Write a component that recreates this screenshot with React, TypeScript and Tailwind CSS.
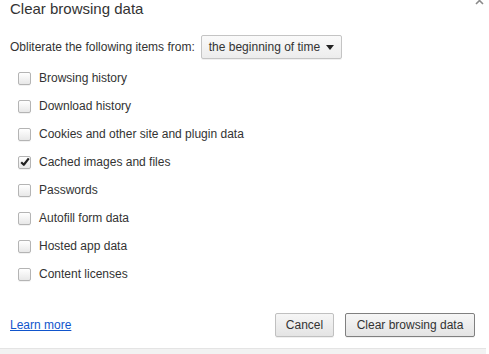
import React from 'react'

const items = [
  { label: 'Browsing history', checked: false },
  { label: 'Download history', checked: false },
  { label: 'Cookies and other site and plugin data', checked: false },
  { label: 'Cached images and files', checked: true },
  { label: 'Passwords', checked: false },
  { label: 'Autofill form data', checked: false },
  { label: 'Hosted app data', checked: false },
  { label: 'Content licenses', checked: false },
]

const Checkbox = ({ checked }: { checked: boolean }) => (
  <span className="flex h-[13px] w-[13px] shrink-0 items-center justify-center rounded-[2px] border border-[#b4b4b4] bg-gradient-to-b from-[#ffffff] to-[#e8e8e8] shadow-[0_1px_0_rgba(0,0,0,0.05)]">
    {checked && (
      <svg width="10" height="10" viewBox="0 0 10 10">
        <path d="M1.2 5.2 L3.8 7.8 L8.8 1.4" fill="none" stroke="#222" strokeWidth="2.2" strokeLinejoin="round" />
      </svg>
    )}
  </span>
)

const App = () => {
  return (
    <div className="relative h-[354px] w-[489px] overflow-hidden bg-white font-['Liberation_Sans',Arial,sans-serif] text-[#333]">
      <button className="absolute left-[475px] top-[-4px] text-[#888]">
        <svg width="9" height="9" viewBox="0 0 9 9">
          <path d="M1 1 L8 8 M8 1 L1 8" stroke="#8a8a8a" strokeWidth="1.6" />
        </svg>
      </button>

      <h1 className="pl-[10px] text-[15px] leading-[18px] font-normal">Clear browsing data</h1>

      <div className="mt-[17px] flex h-[24px] items-center pl-[10px] text-[12px]">
        <span>Obliterate the following items from:</span>
        <div className="ml-[6px] flex h-[24px] w-[141px] items-center justify-between rounded-[2px] border border-[#c4c4c4] bg-gradient-to-b from-[#fafafa] to-[#ececec] pl-[7px] pr-[7px] shadow-[0_1px_0_rgba(0,0,0,0.06)]">
          <span>the beginning of time</span>
          <svg width="8" height="5" viewBox="0 0 8 5">
            <path d="M0 0 L8 0 L4 5 Z" fill="#222" />
          </svg>
        </div>
      </div>

      <div className="mt-[5px] flex flex-col pl-[18px] text-[12px]">
        {items.map((it) => (
          <div key={it.label} className="flex h-[28px] items-center gap-[8px]">
            <Checkbox checked={it.checked} />
            <span>{it.label}</span>
          </div>
        ))}
      </div>

      <div className="mt-[25px] flex h-[24px] items-center justify-between pl-[10px] pr-[14px] text-[12px]">
        <a href="#" className="text-[#15c] underline">Learn more</a>
        <div className="flex gap-[11px]">
          <button className="h-[24px] w-[59px] rounded-[2px] border border-[#c0c0c0] bg-gradient-to-b from-[#f6f6f6] to-[#e4e4e4] text-[#333] shadow-[0_1px_0_rgba(0,0,0,0.06)]">
            Cancel
          </button>
          <button className="h-[24px] w-[130px] rounded-[2px] border border-[#808080] bg-gradient-to-b from-[#f6f6f6] to-[#e4e4e4] text-[#333] shadow-[0_1px_0_rgba(0,0,0,0.06)]">
            Clear browsing data
          </button>
        </div>
      </div>

      <div className="mt-[11px] h-[6px] w-[486px] border-t border-[#e4e4e4] bg-[#f2f2f2]" />
    </div>
  )
}

export default App
